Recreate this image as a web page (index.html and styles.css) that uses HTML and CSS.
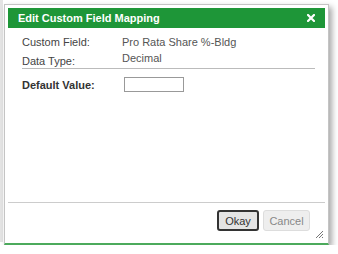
FILE: index.html
```html
<!DOCTYPE html>
<html>
<head>
    <title>Edit Custom Field Mapping</title>
    <link rel="stylesheet" href="styles.css">
</head>
<body>
    <div class="page-edge"></div>
    <div class="dialog">
        <div class="titlebar">
            <span class="title">Edit Custom Field Mapping</span>
            <svg class="close" width="8" height="8" viewBox="0 0 8 8">
                <path d="M1 1 L7 7 M7 1 L1 7" stroke="#fff" stroke-width="2.2" stroke-linecap="square"/>
            </svg>
        </div>
        <div class="content">
            <div class="info-row">
                <span class="label">Custom Field:</span>
                <span class="value">Pro Rata Share %-Bldg</span>
            </div>
            <div class="info-row">
                <span class="label">Data Type:</span>
                <span class="value value-up">Decimal</span>
            </div>
            <div class="field-row">
                <label for="default_value">Default Value:</label>
                <input type="text" id="default_value">
            </div>
        </div>
        <div class="footer">
            <button class="btn btn-okay">Okay</button>
            <button class="btn btn-cancel">Cancel</button>
            <!-- resize grip -->
            <svg class="grip" width="10" height="10" viewBox="0 0 10 10">
                <path d="M9 2 L2 9 M9 5 L5 9 M9 8 L8 9" stroke="#777" stroke-width="1"/>
            </svg>
        </div>
    </div>
</body>
</html>
```

FILE: styles.css
```css
body {
    margin: 0;
    padding: 4px 0 0 4px;
    background-color: #fff;
    font-family: "Liberation Sans", Arial, sans-serif;
    font-size: 11px;
    color: #444;
}

.page-edge {
    position: absolute;
    left: 0;
    top: 0;
    width: 3px;
    height: 242px;
    background-color: #e4e4e4;
}

.dialog {
    position: relative;
    width: 317px;
    height: 232px;
    padding: 3px;
    background-color: #fff;
    border: 1px solid #c4c4c4;
    border-bottom: 2px solid #4caa5c;
    box-shadow: 3px 3px 6px rgba(0, 0, 0, 0.35);
    display: flex;
    flex-direction: column;
}

.titlebar {
    height: 20px;
    background-color: #1e9638;
    color: #fff;
    display: flex;
    align-items: center;
    justify-content: space-between;
    padding: 0 10px 0 10px;
}

.title {
    font-weight: bold;
    font-size: 11px;
}

.content {
    flex: 1;
    padding: 4px 10px 0 14px;
}

.info-row {
    display: flex;
    height: 19px;
    align-items: center;
}

.label {
    width: 100px;
}

.value {
    color: #555;
}

.value-up {
    position: relative;
    top: -3px;
}

.field-row {
    display: flex;
    align-items: center;
    border-top: 1px solid #bbb;
    margin-top: -2px;
    padding-top: 8px;
}

.field-row label {
    width: 102px;
    font-weight: bold;
    color: #333;
}

.field-row input {
    width: 58px;
    height: 13px;
    padding: 0;
    border: 1px solid #999;
    margin: 0;
}

.footer {
    position: relative;
    border-top: 1px solid #ccc;
    height: 38px;
    display: flex;
    justify-content: flex-end;
    align-items: flex-start;
    padding: 7px 15px 0 0;
    box-sizing: border-box;
    gap: 4px;
}

.btn {
    height: 21px;
    font-family: "Liberation Sans", Arial, sans-serif;
    font-size: 11px;
    border-radius: 3px;
    padding: 0;
}

.btn-okay {
    width: 42px;
    background-color: #e4e4e4;
    border: 2px solid #333;
    color: #333;
}

.btn-cancel {
    width: 47px;
    background-color: #eee;
    border: 1px solid #ddd;
    color: #888;
}

.grip {
    position: absolute;
    right: 1px;
    bottom: 1px;
}
```
